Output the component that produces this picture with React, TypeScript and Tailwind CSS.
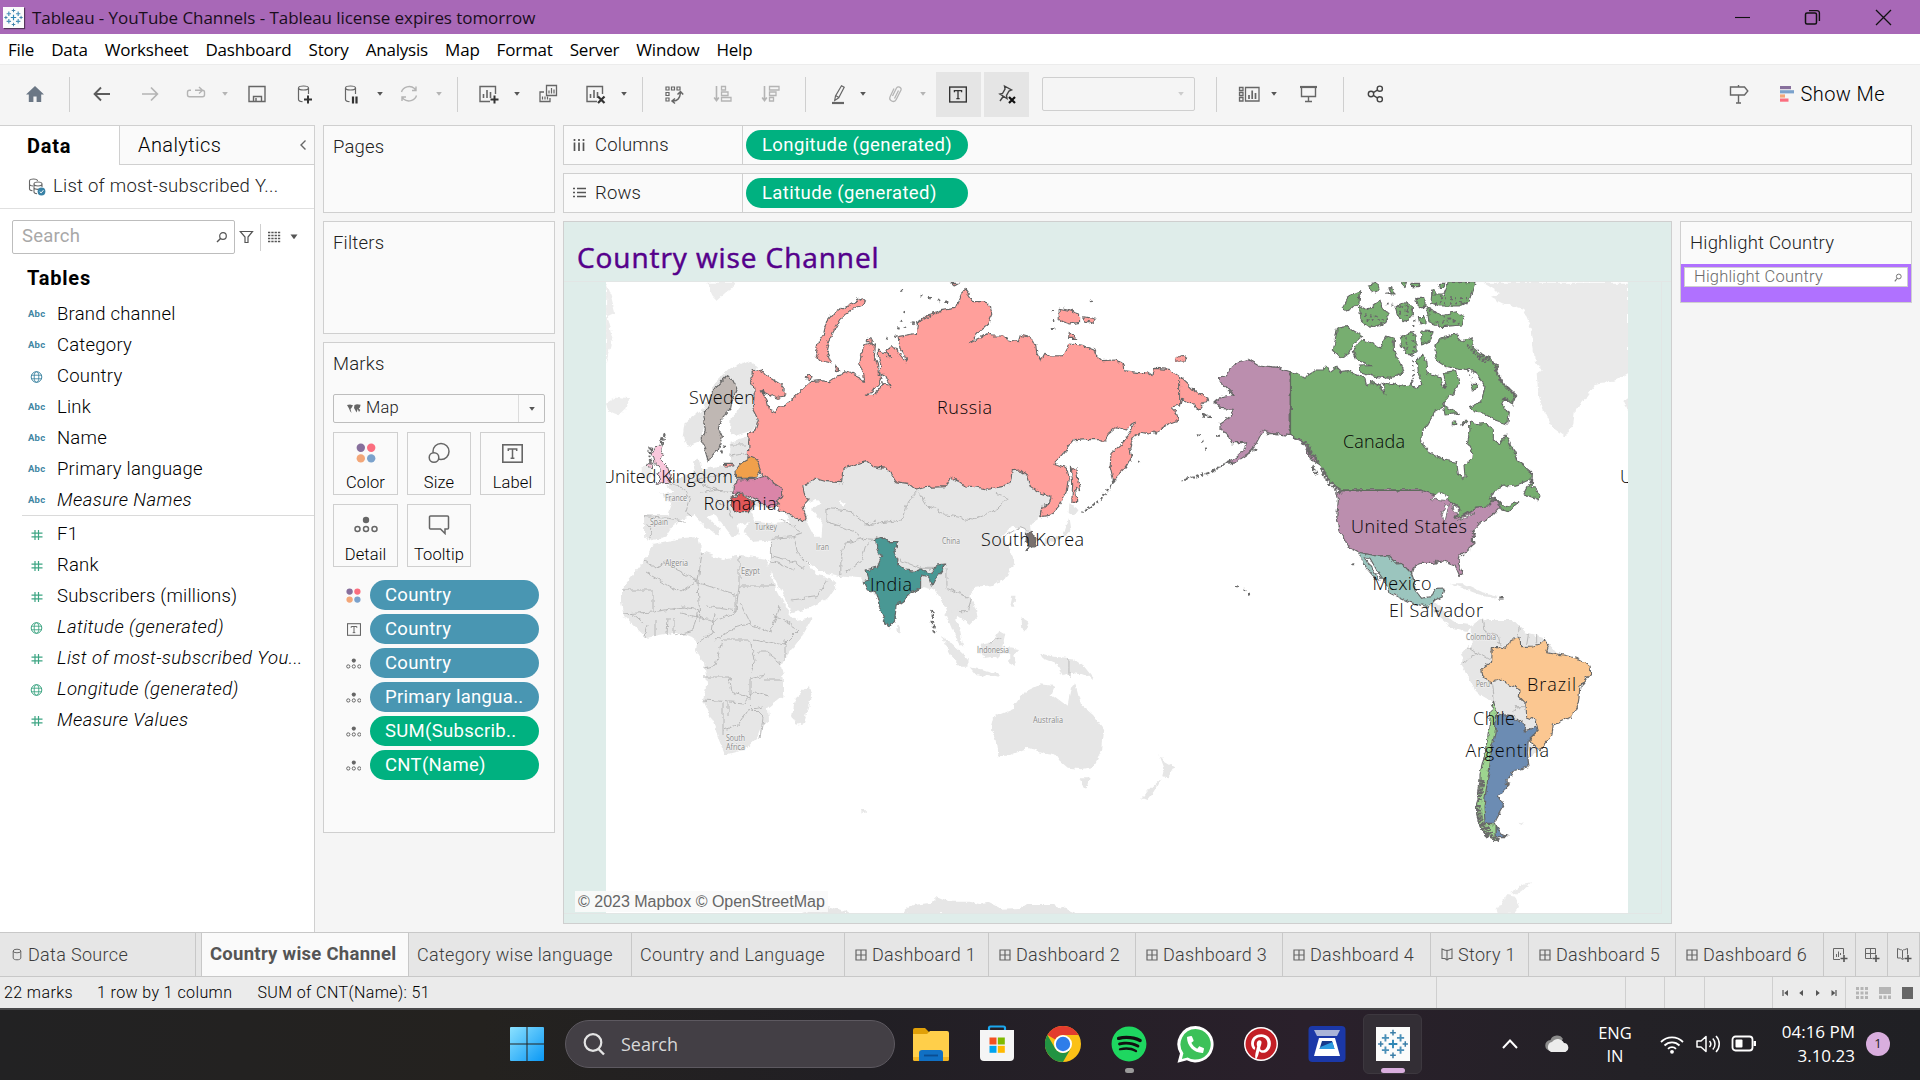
import React from "react";
import { FaSpotify, FaPinterest, FaPhone } from "react-icons/fa";

const UI = "font-['Roboto',sans-serif]";
const SEG = "font-['Open_Sans',sans-serif]";

/* ---------- small drawings ---------- */

function Svg({ w = 24, h = 24, vb, className = "", children }: { w?: number; h?: number; vb?: string; className?: string; children: React.ReactNode }) {
  return (
    <svg width={w} height={h} viewBox={vb ?? `0 0 ${w} ${h}`} fill="none" className={`block shrink-0 ${className}`}>
      {children}
    </svg>
  );
}

function TableauLogo({ size }: { size: number }) {
  const plus = (x: number, y: number, r: number, c: string, k: string) => (
    <path key={k} d={`M${x - r} ${y}H${x + r}M${x} ${y - r}V${y + r}`} stroke={c} strokeWidth={r > 3.4 ? 2 : 1.6} />
  );
  return (
    <Svg w={size} h={size} vb="0 0 36 36">
      <rect width="36" height="36" fill="#fbfbfb" />
      {plus(18, 18, 4.6, "#2f86b5", "a")}
      {plus(10, 11.5, 3.8, "#4a8fb8", "b")}
      {plus(26, 11.5, 3.8, "#4a8fb8", "c")}
      {plus(10, 24.5, 3.8, "#4a8fb8", "d")}
      {plus(26, 24.5, 3.8, "#4a8fb8", "e")}
      {plus(18, 6, 3, "#3b7ea8", "f")}
      {plus(18, 30, 3, "#3b7ea8", "g")}
      {plus(5, 18, 2.8, "#3b7ea8", "h")}
      {plus(31, 18, 2.8, "#3b7ea8", "i")}
    </Svg>
  );
}

function Caret({ c = "#555", className = "" }: { c?: string; className?: string }) {
  return (
    <Svg w={8} h={6} className={className}>
      <path d="M1.2 1h5.6L4 4.8z" fill={c} />
    </Svg>
  );
}

function Sep({ className = "" }: { className?: string }) {
  return <div className={`h-[35px] w-px shrink-0 bg-[#cfcfcf] ${className}`} />;
}

const G = "#666666";
const L = "#b4b4b4";

function Bars({ x, y, c }: { x: number; y: number; c: string }) {
  return <path d={`M${x} ${y + 8}v-4M${x + 3.5} ${y + 8}v-8M${x + 7} ${y + 8}v-6`} stroke={c} strokeWidth="1.6" />;
}

function GlobeIcon({ c }: { c: string }) {
  return (
    <Svg w={16} h={12} vb="0 0 16 12">
      <circle cx="8.500" cy="6" r="5.300" stroke={c} />
      <ellipse cx="8.500" cy="6" rx="2.300" ry="5.300" stroke={c} strokeWidth=".9" />
      <path d="M3.700 4.200h9.600M3.700 7.800h9.600" stroke={c} strokeWidth=".9" />
    </Svg>
  );
}

function HashIcon() {
  return (
    <Svg w={16} h={12}>
      <path d="M7 1v10M10.500 1v10M3.500 4.200h11M3.500 7.800h11" stroke="#3da583" strokeWidth="1.200" />
    </Svg>
  );
}

function DetailIcon({ s = 1 }: { s?: number }) {
  return (
    <Svg w={24 * s} h={18 * s} vb="0 0 24 18">
      <circle cx="12" cy="4" r="3.2" fill="#666" />
      <circle cx="3.5" cy="13" r="2.5" stroke="#666" strokeWidth="1.5" />
      <circle cx="12" cy="13" r="2.5" stroke="#666" strokeWidth="1.5" />
      <circle cx="20.5" cy="13" r="2.5" stroke="#666" strokeWidth="1.5" />
    </Svg>
  );
}

function ColorIcon({ s = 1 }: { s?: number }) {
  return (
    <Svg w={20 * s} h={20 * s} vb="0 0 20 20">
      <circle cx="4.8" cy="4.8" r="4.2" fill="#876f9c" />
      <circle cx="15.2" cy="4.8" r="4.2" fill="#fb6e7f" />
      <circle cx="4.8" cy="15.4" r="4.2" fill="#f3a678" />
      <circle cx="15.2" cy="15.4" r="4.2" fill="#7ba2cc" />
    </Svg>
  );
}

function TextIcon({ w, h, c = "#666" }: { w: number; h: number; c?: string }) {
  return (
    <Svg w={w} h={h} vb="0 0 21 19">
      <rect x=".8" y=".8" width="19.4" height="17.4" stroke={c} strokeWidth="1.6" />
      <path d="M6.3 7V5h8.4v2M10.5 5v9M8.6 14.2h3.8" stroke={c} strokeWidth="1.5" />
    </Svg>
  );
}

function GridIcon() {
  return (
    <Svg w={13} h={12}>
      <path d="M1 1h10v10H1zM6 1v10M1 6h10" stroke="#666" strokeWidth="1.2" />
    </Svg>
  );
}

function StoryIcon() {
  return (
    <Svg w={13} h={13}>
      <path d="M1 1l3 1.200h1.200L6 3.200l.8-1L8 2.200 11 1v9.500H8L6 12 4 10.500H1zM6 3.200V12" stroke="#666" strokeWidth="1.100" />
    </Svg>
  );
}

/* ---------- window chrome ---------- */

function TitleBar() {
  return (
    <div className={`flex h-[34px] items-center bg-[#a868b7] pl-[3px] text-black ${SEG}`}>
      <div className="shadow-[1px_1px_1px_rgba(0,0,0,0.5)]">
        <TableauLogo size={21} />
      </div>
      <span className="ml-[8px] pt-px text-[17px] tracking-[-0.06px] whitespace-nowrap text-[#1a0e1d]">Tableau - YouTube Channels - Tableau license expires tomorrow</span>
      <div className="ml-auto flex items-center pr-[28px]">
        <Svg w={17} h={17}>
          <path d="M1 8.500h15" stroke="#111" strokeWidth="1.100" />
        </Svg>
        <Svg w={17} h={17} className="ml-[53px]">
          <rect x="1.500" y="4" width="11" height="11" rx="1.500" stroke="#111" strokeWidth="1.500" />
          <path d="M5 1.600h8a2.400 2.400 0 0 1 2.400 2.400v8" stroke="#111" strokeWidth="1.400" />
        </Svg>
        <Svg w={17} h={17} className="ml-[54px]">
          <path d="M1 1l15 15M16 1L1 16" stroke="#111" strokeWidth="1.300" />
        </Svg>
      </div>
    </div>
  );
}

function MenuBar() {
  const items = ["File", "Data", "Worksheet", "Dashboard", "Story", "Analysis", "Map", "Format", "Server", "Window", "Help"];
  return (
    <div className={`flex h-[30px] items-center gap-[17px] bg-white pt-[2px] pl-[8px] text-[17px] tracking-[-0.19px] text-black ${SEG}`}>
      {items.map((t) => (
        <span key={t}>{t}</span>
      ))}
    </div>
  );
}

function Toolbar() {
  return (
    <div className="flex h-[61px] items-center border-t border-[#ececec] bg-[#f5f5f5] pb-[2px] pl-[23px]">
      <Svg>
        <path d="M12 4l9 8.6h-2.8V20h-4.6v-5.4h-3.2V20H5.8v-7.4H3z" fill="#6b7785" />
      </Svg>
      <Sep className="ml-[22px]" />
      <Svg className="ml-[20px]">
        <path d="M20 12H5M11 5.5L4.6 12 11 18.5" stroke="#5c5c5c" strokeWidth="1.900" />
      </Svg>
      <Svg className="ml-[24px]">
        <path d="M4 12h15M13 5.5l6.4 6.5-6.4 6.500" stroke={L} strokeWidth="1.700" />
      </Svg>
      <Svg className="ml-[22px]">
        <path d="M7 8.300H5.500a2 2 0 0 0-2 2v2.400a2 2 0 0 0 2 2h13a2 2 0 0 0 2-2v-2.400a2 2 0 0 0-2-2H11M15 5l3.500 3.300L15 11.600" stroke={L} strokeWidth="1.400" />
      </Svg>
      <Caret c={L} className="ml-[13px]" />
      <Svg className="ml-[16px]">
        <path d="M4 4.500h16v15H4zM8.500 19.500v-5h8v5M11 16v3.500" stroke={G} strokeWidth="1.400" />
      </Svg>
      <Svg className="ml-[23px]">
        <ellipse cx="11.500" cy="6" rx="5" ry="2" stroke={G} strokeWidth="1.200" />
        <path d="M6.500 6v11.500c0 1.200 1.500 2 4 2.200M16.500 6v6" stroke={G} strokeWidth="1.200" />
        <path d="M16 13.500v8M12 17.500h8" stroke="#333" strokeWidth="2" />
      </Svg>
      <Svg className="ml-[23px]">
        <ellipse cx="11.500" cy="6" rx="5" ry="2" stroke={G} strokeWidth="1.200" />
        <path d="M6.500 6v11.500c0 1.200 1.500 2 4 2.200M16.500 6v6" stroke={G} strokeWidth="1.200" />
        <path d="M14 14.500v7M17.500 14.500v7" stroke="#333" strokeWidth="2.200" />
      </Svg>
      <Caret className="ml-[13px]" />
      <Svg className="ml-[13px]">
        <path d="M4.500 10a8 7.500 0 0 1 13-3.500l1.500 2M19 4.500v4h-4M19.500 13.500a8 7.500 0 0 1-13 3.500L5 15M5 19v-4h4" stroke={L} strokeWidth="1.400" />
      </Svg>
      <Caret c={L} className="ml-[14px]" />
      <Sep className="ml-[14px]" />
      <Svg className="ml-[18px]">
        <path d="M14 19.500H4v-15h15.500V12" stroke={G} strokeWidth="1.400" />
        <Bars x={7.500} y={8} c={G} />
        <path d="M18.500 13.500v8M14.500 17.500h8" stroke="#333" strokeWidth="2" />
      </Svg>
      <Caret className="ml-[13px]" />
      <Svg className="ml-[15px]">
        <path d="M10.500 3.500h10v10h-10zM8 10H4v9.500h10V16" stroke={G} strokeWidth="1.300" />
        <path d="M13 11.500v-3M15.500 11.500V6M18 11.500V7.500M6.500 17.500v-3M9 17.500v-3M11.500 17.500v-3" stroke={G} strokeWidth="1.200" />
      </Svg>
      <Svg className="ml-[23px]">
        <path d="M14 19.500H4v-15h15.500V12" stroke={G} strokeWidth="1.400" />
        <Bars x={7.500} y={8} c={G} />
        <path d="M15 14.500l6.500 6.500M21.500 14.500L15 21" stroke="#333" strokeWidth="2.200" />
      </Svg>
      <Caret className="ml-[13px]" />
      <Sep className="ml-[14px]" />
      <Svg className="ml-[19px]">
        <path d="M4 5h3v3H4zM9.500 5h3v3h-3zM15 5h3v3h-3zM4 10.500h3v3H4zM4 16h3v3H4z" stroke={G} strokeWidth="1.200" />
        <path d="M10.500 19c5 .5 7.500-3 8-8.500M15.500 12.500l3-3 2.700 3M13 16.500l-3 2.500 3 2.500" stroke={G} strokeWidth="1.500" />
      </Svg>
      <Svg className="ml-[25px]">
        <path d="M5.500 4v14M3.200 15.500l2.300 3.200 2.300-3.200" stroke={L} strokeWidth="1.600" />
        <path d="M10.500 4.500h4v3.500h-4zM10.500 10h6.500v3.500h-6.500zM10.500 15.500h9.500v3.500h-9.500z" stroke={L} strokeWidth="1.300" />
      </Svg>
      <Svg className="ml-[24px]">
        <path d="M5.500 4v14M3.200 15.500l2.300 3.200 2.300-3.200" stroke={L} strokeWidth="1.600" />
        <path d="M10.500 4.500h9.500v3.500h-9.500zM10.500 10h6.500v3.500h-6.500zM10.500 15.500h4v3.500h-4z" stroke={L} strokeWidth="1.300" />
      </Svg>
      <Sep className="ml-[22px]" />
      <Svg className="ml-[20px]">
        <path d="M15.500 3.800l2.700 1.500-5.500 10.500-4 2.700.8-4.500zM9.500 13.500l3 1.700" stroke={G} strokeWidth="1.200" />
        <path d="M6 21h12" stroke={G} strokeWidth="2.200" />
      </Svg>
      <Caret className="ml-[9px]" />
      <Svg className="ml-[16px]">
        <path d="M9.500 14l4-8a2.500 2.500 0 0 1 4.500 2l-4.800 9.500a3.300 3.300 0 0 1-6-3L11 6.500M15.500 8.500l-4 8" stroke={L} strokeWidth="1.300" />
      </Svg>
      <Caret c={L} className="ml-[12px]" />
      <div className="ml-[9px] flex h-[45px] w-[45px] items-center justify-center bg-[#e5e5e5] pr-[2px]">
        <TextIcon w={18} h={17} c="#333" />
      </div>
      <div className="ml-[3px] flex h-[45px] w-[45px] items-center justify-center bg-[#e5e5e5]">
        <Svg>
          <path d="M9.500 4l7 4-2.500 1-2.500 4.500.5 3L5 12l2.500-.5L10 7zM8.500 14l-3.500 5" stroke="#444" strokeWidth="1.400" />
          <path d="M14 15l6 6M20 15l-6 6" stroke="#111" strokeWidth="2.200" />
        </Svg>
      </div>
      <div className="ml-[13px] flex h-[34px] w-[153px] items-center justify-end rounded-[2px] border border-[#cfcfcf] pr-[9px]">
        <Caret c="#ccc" />
      </div>
      <Sep className="ml-[21px]" />
      <Svg className="ml-[20px]">
        <path d="M2.500 5.500h3.500v3H2.500zM2.500 10.500h3.500v3H2.500zM2.500 15.500h3.500v3.500H2.500zM8.500 5.500h13.500V19H8.500z" stroke={G} strokeWidth="1.300" />
        <path d="M12 17v-4M15.200 17V8.500M18.500 17v-6" stroke={G} strokeWidth="1.700" />
      </Svg>
      <Caret className="ml-[9px]" />
      <Svg className="ml-[19px]">
        <path d="M3 5h17" stroke={G} strokeWidth="2.200" />
        <path d="M4.500 6v8.500h14V6M11.500 14.500v5M8 19.500h7" stroke={G} strokeWidth="1.400" />
      </Svg>
      <Sep className="ml-[22px]" />
      <Svg className="ml-[20px]">
        <circle cx="7" cy="12" r="2.700" stroke="#444" strokeWidth="1.400" />
        <circle cx="15.800" cy="6.700" r="2.600" stroke="#444" strokeWidth="1.400" />
        <circle cx="15.800" cy="17.300" r="2.600" stroke="#444" strokeWidth="1.400" />
        <path d="M9.300 10.600l4-2.500M9.300 13.400l4 2.500" stroke="#444" strokeWidth="1.300" />
      </Svg>
      <div className="ml-auto flex items-center pr-[35px]">
        <Svg>
          <path d="M3.500 5h14l3.300 4-3.300 4h-14zM11.500 3v2M11.500 13v8M9 21h5" stroke={G} strokeWidth="1.400" />
        </Svg>
        <Svg w={14} h={16} className="ml-[29px]">
          <path d="M0 0h11v3.200H0z" fill="#876f9c" />
          <path d="M0 4.200h14v3.200H0z" fill="#7ba2cc" />
          <path d="M0 8.400h5v3.200H0z" fill="#f3a678" />
          <path d="M0 12.500h8.500v3.200H0z" fill="#fb6e7f" />
        </Svg>
        <span className={`ml-[7px] text-[20px] font-light tracking-[0.4px] whitespace-nowrap text-black ${UI}`}>Show Me</span>
      </div>
    </div>
  );
}

/* ---------- data pane ---------- */

type Field = { k: "abc" | "geo" | "num"; t: string; i?: boolean; m?: boolean };

const dims: Field[] = [
  { k: "abc", t: "Brand channel" },
  { k: "abc", t: "Category" },
  { k: "geo", t: "Country" },
  { k: "abc", t: "Link" },
  { k: "abc", t: "Name" },
  { k: "abc", t: "Primary language" },
  { k: "abc", t: "Measure Names", i: true },
];

const measures: Field[] = [
  { k: "num", t: "F1" },
  { k: "num", t: "Rank" },
  { k: "num", t: "Subscribers (millions)" },
  { k: "geo", t: "Latitude (generated)", i: true, m: true },
  { k: "num", t: "List of most-subscribed You...", i: true },
  { k: "geo", t: "Longitude (generated)", i: true, m: true },
  { k: "num", t: "Measure Values", i: true },
];

function FieldRow({ f }: { f: Field }) {
  return (
    <div className="flex h-[31px] items-center pt-[2px] pl-[28px]">
      <div className="flex w-[29px] shrink-0">
        {f.k === "abc" && <span className="text-[9.500px] font-bold tracking-[0.2px] text-[#3f86a3]">Abc</span>}
        {f.k === "geo" && <GlobeIcon c={f.m ? "#3da583" : "#3f86a3"} />}
        {f.k === "num" && <HashIcon />}
      </div>
      <span className={`text-[18.500px] font-light whitespace-nowrap text-black ${f.i ? "tracking-[0.42px] italic" : "tracking-[0.22px]"}`}>{f.t}</span>
    </div>
  );
}

function DataPane() {
  return (
    <div className={`flex w-[315px] shrink-0 flex-col border-t border-r border-[#d0d0d0] bg-white ${UI}`}>
      <div className="flex h-[39px] shrink-0">
        <div className="flex w-[119px] items-center pl-[27px] text-[20px] font-bold tracking-[0.800px] text-black">Data</div>
        <div className="flex flex-1 items-center justify-between border-b border-l border-[#d0d0d0] bg-[#fafafa] pr-[7px] pl-[18px] text-[20px] font-light tracking-[0.400px] text-black">
          Analytics
          <Svg w={8} h={12}>
            <path d="M6.500 1.500L2 6l4.500 4.500" stroke="#666" strokeWidth="1.400" />
          </Svg>
        </div>
      </div>
      <div className="flex h-[44px] shrink-0 items-center border-b border-[#e0e0e0] pt-px pl-[28px] text-[18.500px] font-light tracking-[0.250px] text-[#222]">
        <Svg w={18} h={18}>
          <path d="M1.500 3c0-2.600 8-2.600 8 0M1.500 3v8c0 1 1 1.500 3 1.800M6 6c0-2.600 8-2.600 8 0s-8 2.600-8 0v8c0 1 1 1.500 3 1.800M1.500 6.500c.8 1 2 1.400 3.500 1.500M14 6v3M6 10c1 1.500 3 1.500 5 1.300" stroke="#666" strokeWidth="1.100" />
          <circle cx="13.500" cy="13.500" r="3.900" fill="#3882a6" />
          <path d="M11.700 13.500l1.400 1.400 2.300-2.700" stroke="#fff" strokeWidth="1" />
        </Svg>
        <span className="ml-[7px] whitespace-nowrap">List of most-subscribed Y...</span>
      </div>
      <div className="mt-[11px] flex h-[34px] shrink-0 items-center pl-[12px]">
        <div className="flex h-[34px] w-[223px] items-center justify-between rounded-[2px] border border-[#bdbdbd] pr-[6px] pl-[9px] text-[18.500px] tracking-[0.200px] text-[#a8a8a8]">
          Search
          <Svg w={12} h={12}>
            <circle cx="7" cy="5" r="3.300" stroke="#555" strokeWidth="1.200" />
            <path d="M4.500 7.500L1 11" stroke="#555" strokeWidth="1.400" />
          </Svg>
        </div>
        <Svg w={15} h={14} className="ml-[4px]">
          <path d="M1.200 1.500h12.300L9 7v5.500H6V7z" stroke="#555" strokeWidth="1.200" />
        </Svg>
        <div className="ml-[6px] h-[27px] w-px bg-[#cfcfcf]" />
        <Svg w={13} h={12} className="ml-[7px]">
          <path d="M0 1.500h12.500M0 4.500h12.500M0 7.500h12.500M0 10.500h12.500" stroke="#555" strokeWidth="1.500" strokeDasharray="2.300 1" />
        </Svg>
        <Caret className="ml-[9px] scale-125" />
      </div>
      <div className="flex h-[44px] shrink-0 items-center pt-[3px] pl-[27px] text-[20px] font-bold tracking-[0.800px] text-black">Tables</div>
      {dims.map((f) => (
        <FieldRow key={f.t} f={f} />
      ))}
      <div className="mb-[2px] ml-[22px] h-px shrink-0 bg-[#dadada]" />
      {measures.map((f) => (
        <FieldRow key={f.t} f={f} />
      ))}
    </div>
  );
}

/* ---------- cards ---------- */

function MarkButton({ label, children }: { label: string; children: React.ReactNode }) {
  return (
    <div className="flex h-[63px] flex-col items-center border border-[#cfcfcf] text-[16.500px] font-light tracking-[0.100px] text-black">
      <div className="flex h-[40px] items-center">{children}</div>
      <span className="leading-[19px]">{label}</span>
    </div>
  );
}

const pills: { t: string; icon: "color" | "text" | "detail"; g?: boolean }[] = [
  { t: "Country", icon: "color" },
  { t: "Country", icon: "text" },
  { t: "Country", icon: "detail" },
  { t: "Primary langua..", icon: "detail" },
  { t: "SUM(Subscrib..", icon: "detail", g: true },
  { t: "CNT(Name)", icon: "detail", g: true },
];

function CardsColumn() {
  return (
    <div className={`ml-[8px] flex w-[232px] shrink-0 flex-col gap-[8px] text-[18.500px] font-light tracking-[0.200px] text-[#222] ${UI}`}>
      <div className="h-[88px] border border-[#cfcfcf] bg-[#fafafa] pt-[8px] pl-[9px]">Pages</div>
      <div className="h-[113px] border border-[#cfcfcf] bg-[#fafafa] pt-[8px] pl-[9px]">Filters</div>
      <div className="flex h-[491px] flex-col border border-[#cfcfcf] bg-[#fafafa] pl-[9px]">
        <div className="mt-[8px] h-[43px]">Marks</div>
        <div className="flex h-[29px] w-[212px] items-center rounded-[2px] border border-[#bdbdbd] pl-[13px] text-[16.500px]">
          <Svg w={14} h={10}>
            <path d="M0 1l3-.6 3 .8L4.500 4l-1 1L4.500 9 3 7 2 4.500zM7.500 1L10 .3l3.600.5-.7 2.700-1.200 1 1.600 1.600L12 8l-1.300-3L9.500 8.500 8.200 6 7 4z" fill="#666" />
          </Svg>
          <span className="ml-[5px]">Map</span>
          <div className="ml-auto flex h-full w-[26px] items-center justify-center border-l border-[#dcdcdc]">
            <Caret />
          </div>
        </div>
        <div className="mt-[9px] grid w-[212px] grid-cols-[65px_64px_65px] gap-[9px]">
          <MarkButton label="Color">
            <ColorIcon />
          </MarkButton>
          <MarkButton label="Size">
            <Svg w={22} h={22}>
              <circle cx="13" cy="9.500" r="8" stroke="#666" strokeWidth="1.500" />
              <circle cx="6" cy="15.500" r="4.800" fill="#fafafa" stroke="#666" strokeWidth="1.500" />
            </Svg>
          </MarkButton>
          <MarkButton label="Label">
            <TextIcon w={21} h={19} />
          </MarkButton>
          <MarkButton label="Detail">
            <DetailIcon />
          </MarkButton>
          <MarkButton label="Tooltip">
            <Svg w={22} h={20}>
              <path d="M2.500 1h17a1 1 0 0 1 1 1v11a1 1 0 0 1-1 1h-2.500v4.500L12.500 14H2.500a1 1 0 0 1-1-1V2a1 1 0 0 1 1-1z" stroke="#666" strokeWidth="1.500" />
            </Svg>
          </MarkButton>
        </div>
        <div className="mt-[13px] flex flex-col gap-[4px]">
          {pills.map((p, n) => (
            <div key={n} className="flex h-[30px] items-center">
              <div className="flex w-[41px] shrink-0 justify-center pt-px">
                {p.icon === "color" && <ColorIcon s={0.75} />}
                {p.icon === "text" && <TextIcon w={14} h={13} />}
                {p.icon === "detail" && <DetailIcon s={0.65} />}
              </div>
              <div className={`ml-[-4px] flex h-[30px] w-[169px] items-center rounded-full pt-[2px] pl-[15px] font-normal tracking-[0.300px] whitespace-nowrap text-white ${p.g ? "bg-[#00b180]" : "bg-[#4996b2]"}`}>{p.t}</div>
            </div>
          ))}
        </div>
      </div>
    </div>
  );
}

function Shelf({ label, pill, rows = false }: { label: string; pill: string; rows?: boolean }) {
  return (
    <div className="flex h-[40px] shrink-0 border border-[#cfcfcf] bg-[#fafafa] text-[18.500px]">
      <div className="flex w-[179px] shrink-0 items-center border-r border-[#cfcfcf] pl-[9px] font-light tracking-[0.150px] text-[#222]">
        {rows ? (
          <Svg w={13} h={12}>
            <path d="M0 1.500h2M0 5.500h2M0 9.500h2M4 1.500h9M4 5.500h9M4 9.500h9" stroke="#555" strokeWidth="1.700" />
          </Svg>
        ) : (
          <Svg w={13} h={12}>
            <path d="M1.500 0v2M6 0v2M10.500 0v2M1.500 3.500V12M6 3.500V12M10.500 3.500V12" stroke="#555" strokeWidth="1.700" />
          </Svg>
        )}
        <span className="ml-[9px] pt-[2px]">{label}</span>
      </div>
      <div className="mt-[4px] ml-[3px] flex h-[30px] w-[222px] items-center rounded-full bg-[#00b180] pt-[2px] pl-[16px] tracking-[0.390px] whitespace-nowrap text-white">{pill}</div>
    </div>
  );
}

/* ---------- map ---------- */

const LAND = "#e6e6e6";
const EDGE = "#b2b2b2";

function Shape({ d, fill, sw = 1.1 }: { d: string; fill: string; sw?: number }) {
  return <path d={d} fill={fill} stroke="#666" strokeWidth={sw} strokeLinejoin="round" vectorEffect="non-scaling-stroke" />;
}
function Border({ d }: { d: string }) {
  return <path d={d} fill="none" stroke={EDGE} strokeWidth="0.9" vectorEffect="non-scaling-stroke" />;
}
function Specks({ d, w = 2, dash = "3 2" }: { d: string; w?: number; dash?: string }) {
  return <path d={d} fill="none" stroke="#6b6b6b" strokeWidth={w} strokeDasharray={dash} vectorEffect="non-scaling-stroke" />;
}

const labels: [string, number, number, number][] = [
  ["Russia", 937, 414, 55],
  ["Sweden", 689, 404, 66],
  ["United Kingdom", 602, 483, 131],
  ["United Kingdom", 1620, 483, 131],
  ["Romania", 703.5, 510, 73],
  ["India", 870, 591, 42],
  ["South Korea", 981, 546, 103],
  ["Canada", 1343, 448, 62],
  ["United States", 1351, 533, 116],
  ["Mexico", 1372.5, 590, 59],
  ["El Salvador", 1389, 617, 94],
  ["Brazil", 1527, 691, 49],
  ["Chile", 1473, 725, 42],
  ["Argentina", 1465.5, 757, 83.5],
];

const tiny: [string, number, number, number][] = [
  ["France", 665, 501, 22],
  ["Spain", 650, 525, 18],
  ["Turkey", 755, 530, 22],
  ["Iran", 816, 550, 13],
  ["China", 942, 544, 18],
  ["Algeria", 665, 566, 23],
  ["Egypt", 741, 574, 19],
  ["Indonesia", 977, 653, 32],
  ["Australia", 1033, 723, 30],
  ["South", 726, 741, 19],
  ["Africa", 726, 750, 19],
  ["Colombia", 1466, 640, 30],
  ["Peru", 1476, 687, 14],
];

function WorldMap() {
  return (
    <svg width="1022" height="631" viewBox="606 282 1022 631" className="block bg-white">
      <defs>
        <filter id="coast" x="0" y="0" width="1" height="1" filterUnits="objectBoundingBox" colorInterpolationFilters="sRGB">
          <feTurbulence type="fractalNoise" baseFrequency="0.16" numOctaves="3" seed="4" result="n" />
          <feDisplacementMap in="SourceGraphic" in2="n" scale="5.5" xChannelSelector="R" yChannelSelector="G" />
        </filter>
      </defs>

      <g filter="url(#coast)">
        <rect x="606" y="282" width="1022" height="631" fill="#ffffff" />
        <g fill={LAND}>
          <g transform="translate(600 270) scale(.40816 .33333)">
            <path d="M108 735L108 800 135 812 165 795 180 765 205 745 230 735 250 762 290 797 295 780 262 738 280 730 300 765 325 805 340 790 335 765 365 760 352 785 375 815 420 812 420 870 410 895 430 930 470 1030 500 1020 560 985 582 945 560 920 530 915 505 875 515 880 540 905 595 920 640 925 650 950 700 1000 720 900 790 950 820 960 845 1010 850 1040 865 1085 880 1120 890 1130 880 1070 865 1030 890 1050 905 1065 925 1040 915 1000 905 975 920 950 965 945 1000 915 1015 870 1000 830 985 800 1010 770 1040 775 1045 800 1060 800 1055 760 1080 740 1105 680 1060 640 1040 560 450 480 360 500 320 515 318 580 250 600 240 560 228 575 232 605 190 625 165 650 180 665 150 670 175 700 165 735Z" />
            <path d="M205 500L210 460 255 415 280 340 320 295 360 272 385 290 370 330 378 370 388 450 375 480 330 498 318 490 320 445 345 410 330 390 250 480 250 510 215 528Z" />
            <path d="M15 400L40 380 72 385 65 415 45 438 20 425zM100 590l20-5 12 25-15 22-18-5zM262 38h72l-15 20-10 8-22 25-12-15zM15 38l12 40 10 50-18 10 12 60-16 80z" opacity=".75" />
            <path d="M1150 700l25 20-12 18-15-5zM1150 740l5 40-15 20-30 15-25 10 5-18 45-10zM1010 980l8 0-3 30-10 0zM1030 1040l20 15-8 30-10-10zM725 1065l10 5 0 18-8-3z" />
          </g>
          <path d="M653 544L682 538 698 537 702 552 722 559 741 555 767 559 768 568 777 590 786 608 796 620 813 617 804 633 786 657 781 666 784 680 784 695 768 708 769 720 762 725 757 738 744 750 725 755 719 740 713 722 703 700 707 682 704 663 696 650 697 642 691 637 681 633 672 633 659 635 647 638 636 628 624 617 621 603 621 590 635 572 645 560z" />
          <path d="M809 686l3 11-8 26-8 2-4-8 3-19z" />
          <g transform="translate(600 600) scale(.3954 .3333)">
            <path d="M862 108l30 25 40 45 0 22-20 0-25-35zM935 202l50 10 30 15-5 6-60-10zM960 135l35-8 15-35 15 10-5 30-10 40-40 5zM1035 145l25 5-15 20 5 25-15-10zM1110 160l40 10 45 5 30 25 25 38-30-15-30-5-20 8-15-35-40-20zM880 5l20 0 5 30-10 65 15 5-5-30-15-40z" />
            <path d="M1075 275l40-22 35 5-8 25 40 35 10-60 10-8 15 65 30 30 28 45-5 60-22 50-30 8-35-5-20-20-12-20-25-5-45-15-40 20-35 10-5-50-12-45 5-25 50-25zM1213 535h25l-3 25-12 3zM1415 465l15 22 22 15-15 30-15-3 5-25zM1418 535l-15 35-20 30-12-5 20-30z" />
            <path d="M508 941l60-25 60 20 5 6zM760 941l30-25 50-8 15-18 30 15 50 0 30 8 20-5 30 18 50-2 15-12 60 0 50 20 30 15zM660 630h12v8h-10z" />
          </g>
          <g transform="translate(1180 270) scale(.33333)">
            <path fill="#eaeaea" d="M910 38H1344V310L1300 335 1250 340 1210 395 1185 420 1180 460 1155 500 1115 470 1090 420 1075 370 1070 310 1090 300 1065 280 1055 180 1030 120 970 100 930 80 960 70zM1330 395l14-10v50z" />
            <path d="M810 940l40 0 55 25 45 12-10 8-45-12-50-20zM755 990l30 20 15 30 30 20 40 5 30-10-40 30-50-15-50-45z" />
          </g>
          <g transform="translate(1280 540) scale(.33333)">
            <path d="M575 260L610 232 625 240 700 240 740 280 793 295 880 400 780 560 742 570 745 605 775 635 755 648 735 640 645 530 638 485 590 458 560 400 543 375 545 345 575 312z" />
            <path d="M650 1110l30-45 25 5 12 30-15 21h-50zM690 1060l40-25 25-5-40 30zM715 845l20 2-10 6z" opacity=".8" />
          </g>
        </g>

        <g transform="translate(600 270) scale(.40816 .33333)">
          <path fill="#fff" d="M500 700L530 688 540 700 520 718 545 760 543 800 525 800 510 765zM370 728L385 705 410 715 432 710 455 735 465 755 430 762 380 755zM590 690l12 10-8 14z" />
          <Border d="M108 740l60 5 40 8M165 640l40 15 15 30-10 40 15 15M220 640l30-15 60-10M245 670l40-10 40 5M285 690l30 25 10 30M230 605l20 40 50 20M318 525h40M320 558l40-8M112 760l15 20-5 25" />
          <Border d="M440 750l30 12 20 25M420 805l55-5 20-10M475 800l10 50 30 35M420 812v45l60 20M415 870l60 30M480 880l20 15M470 990l60-10 25-45M556 755v-40l60 10 40 40 20-15M556 755l60 25 20 20M600 820l-10 40 0 60M600 820l45-15 40 5M680 800l-30 30-10 45-35 30M650 765l90-15 10-45 25-40M780 665l20 40 50 30 60 15 60-30 30-35-30-15M735 870l50 25 40 0M850 895l0 60 20 10M870 965l40 20-10 40-20 0M990 800l40-30 20 10" />
        </g>
        <Border d="M702 552l-4 30 2 40M645 560l10 8 10-6 33 20M645 572l35 20 15-10 40 12M739 556v30h35M739 586l-3 25-30-5M621 590h32v22l-30 2M653 612l30-5 15 3-5 20-18 5M680 613l35 8 20-8 0-20M715 613l-3 20-15 10M715 640l20-12 15-5-10-20M750 624l20 8 10-25M774 615l25 15-15 15-30-6M722 640h28l5 20-4 12M722 640l-6 25-12 3M704 677h25l3 14 18 8 0-20 15-4M704 700l40 3 10-12 15 5M723 703v32M728 703v14M723 730l15-5 10-15 15-3M748 703l15 15-3 20M757 652h10l15 12M785 640v22M764 680h18M655 620v16M668 618l-1 16M674 618v16M632 613l12 10M648 625l-3 12" />
        <g transform="translate(600 600) scale(.3954 .3333)">
          <Border d="M1186 175v55M985 130l15-10 15-5" />
        </g>
        <g transform="translate(1280 540) scale(.33333)">
          <Border d="M610 235l5 40 40 10 5 30M560 320l30 20-40 30M590 335l45 25M718 262l-5 30M745 282l-5 30M770 285v25M638 430l5 55M700 525l5-25 35 0M700 525l30 30" />
        </g>

        <g transform="translate(600 270) scale(.40816 .33333)">
          <Shape fill="#ff9f9b" d="M367 325L375 305 395 300 405 315 425 330 445 345 457 365 450 382 435 385 415 375 395 362 410 395 415 420 430 428 440 410 450 412 455 400 475 382 490 365 500 352 515 335 540 332 560 335 575 322 590 318 600 302 615 308 635 320 645 337 648 325 645 305 634 282 636 260 645 250 648 225 665 218 675 225 672 260 680 285 682 310 690 320 678 350 665 372 650 372 665 380 685 360 690 335 705 345 712 352 700 320 685 310 688 285 682 262 682 240 700 250 712 265 700 240 720 230 745 270 750 275 745 250 735 235 730 200 775 190 778 160 800 135 835 122 870 115 885 70 895 58 905 75 915 95 945 95 957 110 960 135 950 165 930 185 905 220 930 205 950 190 960 198 990 198 1000 210 1025 215 1030 195 1060 205 1068 225 1070 250 1080 272 1090 250 1100 258 1135 257 1142 240 1150 222 1180 225 1210 240 1215 255 1230 272 1265 270 1282 285 1283 302 1320 308 1340 308 1355 320 1358 295 1395 298 1420 320 1455 360 1470 372 1490 385 1480 400 1468 418 1455 402 1440 400 1425 385 1420 405 1398 412 1410 425 1417 450 1395 460 1370 480 1345 495 1325 490 1305 505 1298 535 1303 560 1290 590 1275 610 1258 632 1250 590 1252 550 1280 520 1300 485 1312 455 1300 465 1290 480 1265 470 1245 490 1240 510 1200 508 1160 512 1135 550 1112 580 1135 590 1145 600 1150 625 1145 665 1130 700 1105 735 1080 740 1085 712 1100 700 1105 680 1080 670 1055 650 1045 615 1030 600 1010 602 1005 640 985 650 950 658 920 650 895 648 880 635 858 622 848 650 800 652 775 660 755 640 725 635 715 615 700 595 670 590 655 575 625 582 595 598 592 638 555 635 525 625 510 640 497 650 500 672 510 690 495 710 505 745 500 755 475 740 440 720 430 705 445 680 445 655 410 635 400 620 390 595 382 570 362 565 365 530 362 495 380 480 388 450 375 420 378 370 375 340Z" />
          <Shape fill="#ff9f9b" d="M640 84L650 95 640 110 612 122 590 145 572 185 560 215 555 240 568 280 540 272 528 250 535 215 548 190 555 155 575 125 610 105zM1125 115l20 5 30 12 0 25-25 5-25-10zM1185 140l32 8-8 12-20-8zM1150 185l18 20-20 0zM1410 265l15-8 13 8-10 8-18 0zM1155 592l12 10 8 60-10-10 3 45-12 0 2-55zM507 315l10 2-4 12-10-4zM655 205l10 2-2 10-8-2zM860 40l20 0-12 8zM575 288l15 12-10 2zM305 580l22 0-2 8-18 0z" />
          <Specks w={2} d="M1258 632L1245 660 1225 690 1200 712 1180 728" />
          <Specks w={2.500} dash="2 7" d="M700 205l25-5 20-80M745 175l30-20M785 75l50 20 30 0M740 62l0 10M1110 120v70M1200 92l10 3M1320 575l10 8M1360 490h12" />
          <Specks w={2} d="M775 160l60-40" dash="2 1" />
          <Shape fill="#bfb7b3" d="M310 320L325 330 335 355 325 385 320 415 295 450 290 475 300 500 290 540 265 573 257 540 248 515 258 480 252 435 265 410 272 380 290 345z" />
          <Specks w={2.500} dash="2 2" d="M302 530l-6 20" />
          <Shape fill="#fac8dc" sw={1} d="M135 530L152 528 148 545 156 550 150 570 165 590 172 615 168 640 135 643 148 625 140 615 148 600 135 580 130 555 125 550zM118 578l12 2-2 14-12-6z" />
          <Specks w={3} dash="3 1.500" d="M125 530l-5 30 6 20M160 490l-12 36" />
          <Shape fill="#f0a04b" d="M345 580L370 562 385 570 395 605 380 625 335 625 333 600z" />
          <Shape fill="#da85a8" d="M337 630L380 628 405 618 420 635 445 655 445 680 430 695 440 705 410 715 395 695 370 680 345 670 325 670 327 650z" />
          <Shape fill="#e15759" d="M325 680L345 672 365 685 378 700 365 725 330 725 318 700z" />
          <Shape fill="#499894" d="M675 808L690 802 708 815 728 815 720 845 730 870 728 880 750 900 780 905 785 895 800 910 815 905 825 885 845 882 835 905 822 925 812 948 805 920 788 915 788 952 765 965 745 990 728 1005 725 1045 708 1073 695 1045 685 1010 675 965 655 960 645 935 660 930 652 900 680 890 690 860 678 830z" />
          <Shape fill="#79706e" d="M1045 790L1058 785 1068 805 1066 825 1050 832 1044 815z" />
          <Specks w={2.500} dash="3 2" d="M815 1020l-3 30 10 40M1045 840h6M1477 435l20 8" />
          <path d="M1420 320V410" stroke="#6b6b6b" vectorEffect="non-scaling-stroke" />
        </g>

        <g transform="translate(1180 270) scale(.33333)">
          <Shape fill="#bb8eae" d="M331 305L290 292 235 285 205 268 180 275 150 295 140 320 118 325 130 345 160 375 130 378 105 395 125 415 160 418 150 440 120 460 120 480 140 490 155 518 185 518 200 515 190 545 160 570 130 582 170 575 215 545 235 508 250 480 285 490 331 497 365 515 400 575 425 590 415 550 380 510 350 495 331 495z" />
          <Specks w={2} dash="4 1.500" d="M130 582L90 608 40 622 5 628M205 548l30-12M262 490h30M70 435l24 8M108 497h12" />
          <Specks w={2} dash="2 6" d="M55 490l30 60M168 948l35 12 8 15M520 880v10" />
          <Shape fill="#77ae70" d="M331 305L350 310 375 325 385 312 405 300 430 300 440 285 450 305 470 290 480 308 505 305 530 315 555 325 560 345 580 335 600 345 615 375 610 345 640 340 660 350 685 345 700 325 690 345 715 355 725 340 715 310 712 270 725 250 740 275 745 310 780 320 790 355 800 340 790 310 830 305 838 340 820 370 800 385 790 410 765 425 745 460 728 480 725 515 745 545 790 570 830 577 835 610 850 630 858 620 855 585 875 570 878 545 862 520 870 480 868 455 900 462 920 460 940 480 940 510 960 525 978 495 995 530 1010 570 1030 585 1055 605 1053 628 1010 645 975 648 945 660 930 690 945 685 960 700 975 712 1000 700 1018 698 985 725 968 720 950 690 925 708 890 712 850 735 830 750 822 742 840 715 810 695 780 690 765 675 722 660 485 660 470 650 445 630 430 600 415 580 380 530 365 510 331 495Z" />
          <Shape fill="#77ae70" d="M1055 628L1032 672 1060 682 1078 690 1080 675 1068 655 1053 652zM800 200L830 195 850 215 880 200 875 230 900 250 930 265 950 290 960 330 1005 375 1000 405 975 385 965 400 985 430 980 462 945 450 910 430 880 425 870 410 905 395 915 350 895 320 870 295 850 300 800 290 770 270 765 240 775 205zM520 240L545 210 580 220 600 235 620 198 640 205 640 240 665 290 670 310 630 325 590 320 540 305 535 288 575 287 530 270zM472 175L500 170 548 198 520 220 510 245 485 265 460 240zM660 205L695 185 708 200 708 245 690 258 665 230zM720 183L762 185 745 215 725 225zM487 115l20-35 35-15-5 30-20 20-15 8zM535 105l25 15 40-30 8 30 22 10-15 30-45 15-30-25zM645 110l30-15 22 15 0 30-25 15-20-20zM710 85l25 0 0 25-20 0zM740 110l40 25 50-10 22 15-5 25-60 5-40-15zM755 75l35 0 15-37 80 0-12 35-5 20-30 15-60 0-25-10zM565 45l25-5 5 20-18 8zM625 55l10-5 8 25-8 0zM690 40l30 0-5 10-20 0zM715 140l20 0 0 20-15 5zM790 405l45 25-40 5zM660 38h20l-5 15zM755 60h10v15h-10zM775 40l20 0-5 15-12 0zM620 70l20-5 5 10zM875 340l15 0 5 15-15 5zM820 450h10v14h-10zM845 465l10-15 5 5z" />
          <Shape fill="#bb8eae" d="M485 660L722 660 765 675 810 695 840 720 825 745 850 737 890 712 925 708 945 685 960 712 935 740 900 760 880 780 885 820 840 860 835 880 848 910 840 920 825 885 790 872 760 880 725 880 700 890 695 912 665 880 650 882 625 857 590 858 535 847 505 830 480 780 470 740 475 690 470 668z" />
          <Shape fill="#fff" sw={0.800} d="M750 690L780 665 805 680 800 692 770 688zM795 705L808 702 795 750 785 742zM818 702L835 715 835 740 822 722zM832 752L870 730 885 728 850 747z" />
          <path fill="#fff" d="M958 662l22-9-30 28zM985 655l25-6-2 16 8 15-18 12-18-14z" />
          <Specks w={4} dash="3 1" d="M372 512l20 35 22 30M425 595l20 40 40 35M398 590l12 25" />
          <Specks w={3} dash="2 1" d="M880 780l0 40M900 250l45 35 15 45 45 45M1005 375l-10 30M765 878l10-5M860 225l60 55" />
          <Specks w={2} dash="2 3" d="M700 150v190M560 343h50M620 100l80 20M750 120l90 40M860 300l20 25M540 130l50 10M780 85h80M750 100h110M660 110v40M680 105v45M560 150h60M770 155h70M680 200v50" />
          <Shape fill="#9bc5be" d="M535 847L590 858 625 857 650 882 665 880 695 912 700 925 705 960 725 985 755 980 765 958 792 957 785 980 765 990 745 1010 690 998 630 970 625 950 590 900 570 865 555 860 570 890 600 930 590 930 560 895z" />
          <path d="M745 1003l25 18 15 2-12-22z" fill={LAND} />
          <Specks w={3} dash="5 0" d="M955 984h16M203 970l6 4M765 1020l12 4" />
        </g>

        <g transform="translate(1280 540) scale(.33333)">
          <Shape fill="#6c8cb3" d="M650 525L700 530 735 555 732 573 770 560 772 575 745 600 742 640 747 680 700 692 695 710 678 715 680 745 655 770 670 795 645 840 645 850 610 850 605 820 620 740 622 690 635 620 645 560zM648 855L648 890 685 890 665 882z" />
          <Shape fill="#9dd48f" d="M640 485L650 520 645 580 635 620 628 690 620 740 612 800 615 850 648 852 648 893 655 905 625 895 600 860 590 820 590 790 600 760 600 700 615 640 625 580 632 520z" />
          <Specks w={5} dash="3 .8" d="M606 720l-8 60M595 795l3 45 25 45 35 18" />
          <Specks w={4} dash="2 1.500" d="M612 850l25 35" />
          <Shape fill="#fbc791" d="M637 320L655 320 680 325 690 300 720 292 722 320 760 318 780 312 793 298 805 320 800 335 850 345 890 355 930 378 932 400 900 440 895 490 875 530 820 555 815 590 780 630 745 600 775 570 765 540 740 530 738 490 718 470 720 450 680 430 665 418 635 425 608 410 605 385 635 365z" />
          <Specks w={3} dash="3 0" d="M680 730l8 3" />
        </g>
      </g>

      <path d="M1290.500 372v63M1342 490.500h78" stroke="#5f6b5d" strokeWidth="1.200" />

      <g className="font-['Open_Sans',sans-serif]" fill="#868686" stroke="#f4f4f4" strokeWidth="1.200" paintOrder="stroke" fontSize="9">
        {tiny.map(([t, x, y, w]) => (
          <text key={t} x={x} y={y} textLength={w} lengthAdjust="spacingAndGlyphs">
            {t}
          </text>
        ))}
      </g>
      <g className="font-['Open_Sans',sans-serif] font-light" fill="#050505" fontSize="18">
        {labels.map(([t, x, y, w]) => (
          <text key={t + x} x={x} y={y} textLength={w}>
            {t}
          </text>
        ))}
      </g>
    </svg>
  );
}

function Viz() {
  return (
    <div className="relative flex h-[703px] w-[1109px] shrink-0 flex-col border border-[#cfcfcf] bg-[#dfedea]">
      <div className="flex h-[60px] items-center border-b border-[#e2e6e5] pt-[10px] pl-[13px] text-[28px] tracking-[0.920px] text-[#55008b] [-webkit-text-stroke:0.5px_#55008b]">
        <span className="font-['Open_Sans',sans-serif]">Country wise Channel</span>
      </div>
      <div className="mr-[9px] h-[632px] border-r border-b border-[#e2e6e5] pl-[42px]">
        <WorldMap />
      </div>
      <div className="absolute bottom-[11px] left-[11px] h-[21px] bg-[#fafafa]/90 px-[3px] font-['Liberation_Sans',sans-serif] text-[16px] leading-[21px] whitespace-nowrap text-[#666]">© 2023 Mapbox © OpenStreetMap</div>
    </div>
  );
}

function HighlightCard() {
  return (
    <div className="flex h-[82px] w-[232px] flex-col border border-[#cfcfcf] bg-[#fafafa] font-light tracking-[0.200px]">
      <div className="flex h-[42px] shrink-0 items-center pt-[2px] pl-[9px] text-[18.500px] text-[#222]">Highlight Country</div>
      <div className="flex-1 bg-[#b071ff] px-[3px] pt-[3px]">
        <div className="flex h-[20px] items-center justify-between overflow-hidden border border-[#cfcfcf] bg-white pr-[5px] pl-[9px] text-[16.500px] leading-[20px] text-[#6b6b6b]">
          Highlight Country
          <Svg w={8} h={9}>
            <circle cx="4.800" cy="3.500" r="2.400" stroke="#777" />
            <path d="M3 5.500L.8 8.300" stroke="#777" strokeWidth="1.200" />
          </Svg>
        </div>
      </div>
    </div>
  );
}

/* ---------- bottom bars ---------- */

function PlusMark() {
  return <path d="M12 8v7M8.500 11.500h7" stroke="#555" strokeWidth="1.600" />;
}

function SheetTabs() {
  const tab = "flex shrink-0 items-center border-r border-[#c8c8c8] whitespace-nowrap";
  const dash = (t: string, w: string) => (
    <div className={`${tab} ${w} gap-[4px] pl-[10px]`}>
      <GridIcon />
      {t}
    </div>
  );
  return (
    <div className={`flex h-[45px] shrink-0 border-t border-b border-[#c8c8c8] bg-[#e6e6e6] text-[18px] font-light tracking-[0.330px] text-[#3c3c3c] ${UI}`}>
      <div className={`${tab} w-[196px] pl-[12px]`}>
        <Svg w={10} h={13}>
          <ellipse cx="5" cy="3" rx="3.800" ry="1.800" stroke="#666" />
          <path d="M1.200 3v7c0 2.400 7.600 2.400 7.600 0V3" stroke="#666" />
        </Svg>
        <span className="ml-[6px]">Data Source</span>
      </div>
      <div className={`${tab} w-[6px]`} />
      <div className={`${tab} w-[207px] bg-[#fafafa] pl-[8px] text-[18.500px] font-bold tracking-[0.270px] text-[#555]`}>Country wise Channel</div>
      <div className={`${tab} w-[223px] pl-[8px]`}>Category wise language</div>
      <div className={`${tab} w-[213px] pl-[8px]`}>Country and Language</div>
      {dash("Dashboard 1", "w-[144px]")}
      {dash("Dashboard 2", "w-[147px]")}
      {dash("Dashboard 3", "w-[147px]")}
      {dash("Dashboard 4", "w-[148px]")}
      <div className={`${tab} w-[98px] gap-[4px] pl-[10px]`}>
        <StoryIcon />
        Story 1
      </div>
      {dash("Dashboard 5", "w-[147px]")}
      {dash("Dashboard 6", "w-[148px]")}
      <div className={`${tab} w-[32px] pl-[8px]`}>
        <Svg w={16} h={16}>
          <path d="M8 12.500H1.500v-11h10v6M4.500 10V7M6.500 10V4.500M8.500 8V6" stroke="#666" />
          <PlusMark />
        </Svg>
      </div>
      <div className={`${tab} w-[32px] pl-[8px]`}>
        <Svg w={16} h={16}>
          <path d="M8 11.500H1.500v-10h10v6M6.500 1.500v10M1.500 6.500h10" stroke="#666" />
          <PlusMark />
        </Svg>
      </div>
      <div className={`${tab} w-[32px] pl-[8px]`}>
        <Svg w={16} h={16}>
          <path d="M8 11.500l-1.500 1-2-1.500h-3v-9.500l3 1.200h1l1 1 1-1h1l3-1.200v6M6.500 3.700v8" stroke="#666" />
          <PlusMark />
        </Svg>
      </div>
    </div>
  );
}

function StatusBar() {
  const cell = "h-full shrink-0 border-l border-[#cfcfcf]";
  return (
    <div className={`flex h-[31px] shrink-0 items-center bg-[#ebebeb] pl-[4px] text-[16px] font-light tracking-[0.400px] text-black ${UI}`}>
      <span className="pt-px">22 marks</span>
      <span className="ml-[24px] pt-px">1 row by 1 column</span>
      <span className="ml-[25px] pt-px">SUM of CNT(Name): 51</span>
      <div className={`${cell} ml-auto w-[189px]`} />
      <div className={`${cell} w-[39px]`} />
      <div className={`${cell} w-[40px]`} />
      <div className={`${cell} w-[68px]`} />
      <div className={`${cell} flex w-[73px] items-center pl-[9px]`}>
        <Svg w={56} h={8}>
          <path d="M1 1v6M54 1v6" stroke="#555" strokeWidth="1.200" />
          <path d="M6 1v6L2.200 4zM21 1v6L17.200 4zM34 1v6l3.800-3zM49.500 1v6l3.800-3z" fill="#555" />
        </Svg>
      </div>
      <div className={`${cell} flex w-[75px] items-center gap-[11px] pl-[10px]`}>
        <Svg w={12} h={12}>
          <path d="M1.500 0v12M6 0v12M10.500 0v12" stroke="#b5b5b5" strokeWidth="3" strokeDasharray="3 1.500" />
        </Svg>
        <Svg w={12} h={12}>
          <path d="M0 0h12v7H0zM0 8.500h3V12H0zM4.500 8.500h3V12h-3zM9 8.500h3V12H9z" fill="#b5b5b5" />
        </Svg>
        <Svg w={11} h={12}>
          <path d="M0 0h11v12H0z" fill="#666" />
        </Svg>
      </div>
    </div>
  );
}

function Taskbar() {
  return (
    <div className={`flex h-[72px] shrink-0 items-center border-t-2 border-[#48484a] bg-[linear-gradient(90deg,#222223_0%,#24221f_25%,#211f24_45%,#2a202b_68%,#232126_85%,#202024_100%)] pb-[2px] pl-[509px] text-white ${SEG}`}>
      <Svg w={36} h={36}>
        <defs>
          <linearGradient id="win" x1="0" y1="0" x2="1" y2="1">
            <stop offset="0" stopColor="#8be1ff" />
            <stop offset="1" stopColor="#0a98f5" />
          </linearGradient>
        </defs>
        <path d="M1 2a1 1 0 0 1 1-1h15.500v16.500H1zM18.500 1H34a1 1 0 0 1 1 1v15.500H18.500zM1 18.500h16.500V35H2a1 1 0 0 1-1-1zM18.500 18.500H35V34a1 1 0 0 1-1 1H18.500z" fill="url(#win)" />
      </Svg>
      <div className="ml-[20px] flex h-[48px] w-[330px] items-center rounded-full border border-[#5d5960] bg-[#433f45] pl-[17px] text-[18px] text-[#d8d8d8]">
        <Svg w={24} h={24}>
          <circle cx="10" cy="10.500" r="8.300" stroke="#e4e4e4" strokeWidth="2.200" />
          <path d="M15.500 17l5.500 5.500" stroke="#e4e4e4" strokeWidth="2.400" />
        </Svg>
        <span className="ml-[14px]">Search</span>
      </div>
      <Svg w={38} h={36} className="ml-[17px]">
        <path d="M1 4a2 2 0 0 1 2-2h10l4 4v4H1z" fill="#e0a008" />
        <path d="M1 8h14l3-3h17a2 2 0 0 1 2 2v26a2 2 0 0 1-2 2H3a2 2 0 0 1-2-2z" fill="#ffcf4a" />
        <path d="M1 31h36v2a2 2 0 0 1-2 2H3a2 2 0 0 1-2-2z" fill="#f3b522" />
        <path d="M7 35V27a3 3 0 0 1 3-3h18a3 3 0 0 1 3 3v8z" fill="#1070c4" />
        <path d="M12 29.500h14" stroke="#0a4d92" strokeWidth="1.800" />
      </Svg>
      <Svg w={36} h={38} className="ml-[29px]">
        <path d="M10 7V3a1.500 1.500 0 0 1 1.500-1.500h13A1.500 1.500 0 0 1 26 3v4" stroke="#1aa7ee" strokeWidth="2.200" />
        <path d="M1 5h34v27a4 4 0 0 1-4 4H5a4 4 0 0 1-4-4z" fill="#f5f5f5" />
        <path d="M10.500 12.500h7v7h-7z" fill="#f25022" />
        <path d="M18.800 12.500h7v7h-7z" fill="#7fba00" />
        <path d="M10.500 20.800h7v7h-7z" fill="#00a4ef" />
        <path d="M18.800 20.800h7v7h-7z" fill="#ffb900" />
      </Svg>
      <Svg w={36} h={36} className="ml-[30px]">
        <circle cx="18" cy="18" r="18" fill="#fbc116" />
        <path d="M2.410 9A18 18 0 0 1 33.590 9H18a9 9 0 0 0-7.790 4.500z" fill="#e33b2e" />
        <path d="M2.410 9A18 18 0 0 0 18 36l7.790-13.500A9 9 0 0 1 10.210 22.500z" fill="#229342" />
        <circle cx="18" cy="18" r="9" fill="#fff" />
        <circle cx="18" cy="18" r="7.200" fill="#2f7de9" />
      </Svg>
      <div className="relative ml-[30px] flex h-[36px] w-[36px] items-center justify-center rounded-full">
        <Svg w={36} h={36}>
          <circle cx="18" cy="18" r="15" fill="#111" />
        </Svg>
        <FaSpotify className="absolute inset-0 h-[36px] w-[36px] text-[#1ed760]" />
        <div className="absolute top-[42px] left-[14px] h-[5px] w-[9px] rounded-full bg-[#9a9a9a]" />
      </div>
      <div className="relative ml-[30px] h-[37px] w-[37px]">
        <Svg w={37} h={37}>
          <path d="M18.500 0a18.200 18.200 0 1 1-8.600 34.300L.5 36.700 3 27.500A18.200 18.200 0 0 1 18.500 0z" fill="#fff" />
          <path d="M18.500 3a15.300 15.300 0 1 1-7.800 28.500l-5.800 1.500 1.500-5.800A15.300 15.300 0 0 1 18.500 3z" fill="#3cc159" />
        </Svg>
        <FaPhone className="absolute top-[10px] left-[10px] h-[17px] w-[17px] -scale-x-100 text-white" />
      </div>
      <div className="ml-[30px] flex h-[34px] w-[34px] items-center justify-center rounded-full bg-white">
        <FaPinterest className="h-[32px] w-[32px] text-[#c31f26]" />
      </div>
      <Svg w={38} h={36} className="ml-[30px]">
        <rect x=".5" width="37" height="36" rx="4" fill="#1b38a8" />
        <path d="M6 4h26l-3 6H9z" fill="#a9b4d8" />
        <path d="M11 12h16l5 18H6z" fill="#fff" />
        <path d="M14 15h10l2.500 8h-15z" fill="#173a8c" />
        <path d="M12.500 21l12-5 2 7h-15z" fill="#2d9be0" />
      </Svg>
      <div className="relative ml-[17px] flex h-[60px] w-[59px] items-center justify-center rounded-[6px] border border-[#3d383f] bg-[#332e35]">
        <TableauLogo size={34} />
        <div className="absolute bottom-0 left-[17px] h-[5px] w-[24px] rounded-full bg-[#d9aede]" />
      </div>
      <div className="ml-auto flex items-center pr-[30px]">
        <Svg w={18} h={12}>
          <path d="M2 10l7-7.500 7 7.500" stroke="#fff" strokeWidth="2" />
        </Svg>
        <Svg w={26} h={18} className="ml-[26px]">
          <path d="M6 16a5.500 5.500 0 0 1-.5-11A7 7 0 0 1 18 4z" fill="#8c8c8c" />
          <path d="M6 17a5.300 5.300 0 0 1 1-10 7 7 0 0 1 12 1 4.700 4.700 0 0 1 1.500 9z" fill="#ececec" />
        </Svg>
        <div className="ml-[26px] w-[36px] text-center text-[16.500px] leading-[23px]">ENG IN</div>
        <Svg w={26} h={20} className="ml-[26px]">
          <path d="M2 8a15.500 15.500 0 0 1 22 0M5.500 11.500a10.500 10.500 0 0 1 15 0M9 14.800a5.600 5.600 0 0 1 8 0" stroke="#fff" strokeWidth="1.800" />
          <circle cx="13" cy="17.800" r="1.900" fill="#fff" />
        </Svg>
        <Svg w={26} h={20} className="ml-[10px]">
          <path d="M2 7h4l5-4.500v15L6 13H2z" stroke="#fff" strokeWidth="1.500" strokeLinejoin="round" />
          <path d="M14.500 7a4.500 4.500 0 0 1 0 6M17.800 4.500a8 8 0 0 1 0 11M21 2a11.500 11.500 0 0 1 0 16" stroke="#fff" strokeWidth="1.500" />
        </Svg>
        <Svg w={26} h={18} className="ml-[10px]">
          <rect x="1.500" y="1.500" width="20" height="14" rx="3" stroke="#fff" strokeWidth="1.800" />
          <rect x="4.500" y="4.500" width="7" height="8" rx="1" fill="#fff" />
          <path d="M23.800 6v5" stroke="#fff" strokeWidth="2.400" />
        </Svg>
        <div className="ml-[21px] w-[77px] text-right text-[17px] leading-[24px] whitespace-nowrap">
          04:16 PM
          <br />
          3.10.23
        </div>
        <div className="ml-[11px] flex h-[24px] w-[24px] items-center justify-center rounded-full bg-[#d9aede] text-[13px] text-[#222]">1</div>
      </div>
    </div>
  );
}

export default function App() {
  return (
    <div className="flex h-[1080px] w-[1920px] flex-col overflow-hidden bg-[#f5f5f5]">
      <TitleBar />
      <MenuBar />
      <Toolbar />
      <div className="flex h-[807px] shrink-0">
        <DataPane />
        <CardsColumn />
        <div className={`ml-[8px] flex w-[1349px] flex-col gap-[8px] ${UI}`}>
          <Shelf label="Columns" pill="Longitude (generated)" />
          <Shelf label="Rows" pill="Latitude (generated)" rows />
          <div className="flex gap-[8px]">
            <Viz />
            <HighlightCard />
          </div>
        </div>
      </div>
      <SheetTabs />
      <StatusBar />
      <Taskbar />
    </div>
  );
}
